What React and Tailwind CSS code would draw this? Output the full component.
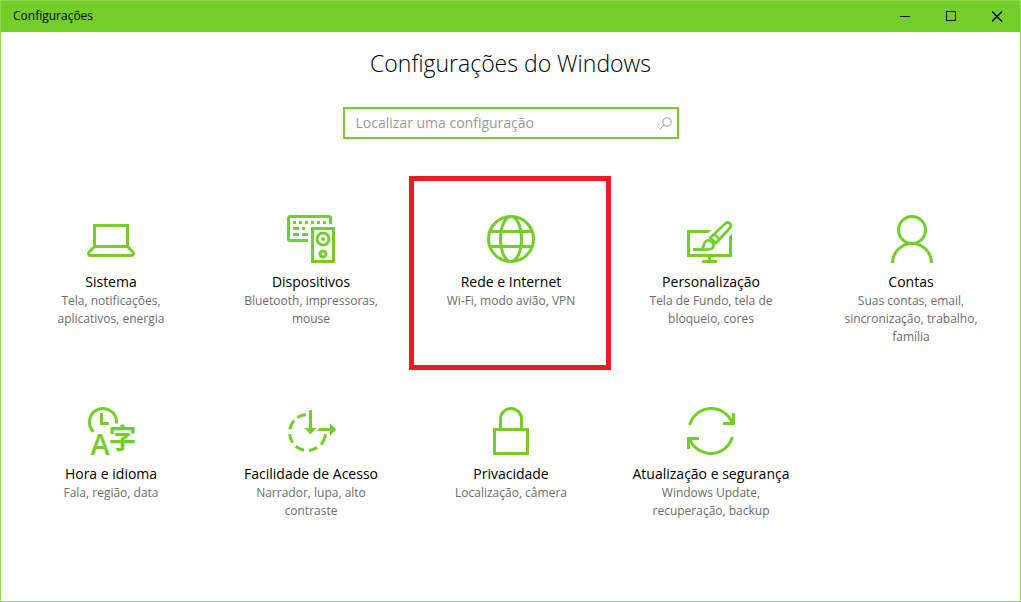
const green = "text-[#73ce2a]";

function Icon({ children }) {
  return (
    <svg
      viewBox="0 0 48 48"
      className={`size-12 shrink-0 overflow-visible ${green}`}
      fill="none"
      stroke="currentColor"
      strokeWidth="3"
      aria-hidden="true"
    >
      {children}
    </svg>
  );
}

const SystemIcon = () => (
  <Icon>
    <path d="M7.5 32V10.5h33V32M6.5 31.5h35" />
    <path d="M7.5 31.5l-5.2 5.2c-1.6 1.7-.8 3.8 1.4 3.8h40.6c2.2 0 3-2.1 1.4-3.8l-5.2-5.2" />
  </Icon>
);

const DevicesIcon = () => (
  <Icon>
    <path d="M21 25.5H3A1.5 1.5 0 0 1 1.5 24V3A1.5 1.5 0 0 1 3 1.5h39A1.5 1.5 0 0 1 43.5 3v6" />
    <path d="M6 7.5h3M12 7.5h3M18 7.5h3M24 7.5h3M30 7.5h3M36 7.5h3M6 13.5h6M15 13.5h3M6 19.5h6M15 19.5h6" />
    <rect x="25.5" y="13.5" width="21" height="33" />
    <circle cx="36" cy="24" r="6" />
    <circle cx="36" cy="24" r="2" fill="currentColor" stroke="none" />
    <circle cx="36" cy="39" r="3" />
  </Icon>
);

const NetworkIcon = () => (
  <Icon>
    <circle cx="24" cy="24" r="22.5" />
    <ellipse cx="24" cy="24" rx="10.5" ry="22.5" />
    <path d="M3 16.5h42M3 31.5h42" />
  </Icon>
);

const PersonalizationIcon = () => (
  <Icon>
    <path d="M24 15L21 18H3V39H42V21.5L45 18V42H0V15Z" fill="currentColor" stroke="none" />
    <path d="M22.5 42v4M15 46.5h15" />
    <path d="M6 34.5h15" />
    <path
      d="M23.3 22.7L38.6 8.3a3.2 3.2 0 0 1 4.500 4.500L28.800 28.200Z"
      strokeWidth="2.8"
      strokeLinejoin="round"
    />
    <path d="M27.300 19l5.200 5.200" strokeWidth="2.4" />
    <path
      d="M14.5 34.5c3-1.800 1.300-5 3.500-7.400 2-2.100 5.100-2.200 7.100-.2 2 2 1.900 5-.2 6.600-2 1.500-5.400 1-10.400 1Z"
      strokeWidth="2.8"
      fill="#fff"
    />
  </Icon>
);

const AccountsIcon = () => (
  <Icon>
    <circle cx="25" cy="15" r="13.5" />
    <path d="M5.5 48a19.5 19.5 0 0 1 39 0" />
  </Icon>
);

const TimeIcon = () => (
  <Icon>
    <path d="M6.5 24.6A13.5 13.5 0 1 1 29.4 16.5" />
    <path d="M14.5 6v10.5H22" />
    <text x="13" y="48" textAnchor="middle" fill="currentColor" stroke="none" className="font-['Open_Sans',sans-serif] text-[29px] font-semibold">
      A
    </text>
    <text x="35.5" y="42" textAnchor="middle" fill="currentColor" stroke="none" className="font-['Noto_Sans_CJK_SC',sans-serif] text-[28px] font-bold">
      字
    </text>
  </Icon>
);

const dash = ([from, to]) => {
  const point = (deg) => {
    const a = (deg * Math.PI) / 180;
    return `${(20.5 + 18 * Math.cos(a)).toFixed(2)} ${(25.5 + 18 * Math.sin(a)).toFixed(2)}`;
  };
  return `M${point(from)}A18 18 0 0 1 ${point(to)}`;
};

const dashes = [[5, 42], [57, 85], [101, 131], [146, 175], [190, 222], [236, 265]];

const AccessIcon = () => (
  <Icon>
    <path d={dashes.map(dash).join("")} />
    <path d="M23.5 3v19M32 22.5h12" />
    <path d="M17.5 21h12L23.5 27.5ZM43 16.2l6.3 6.3-6.3 6.3ZM30 24l3-3v3Z" fill="currentColor" stroke="none" />
  </Icon>
);

const PrivacyIcon = () => (
  <Icon>
    <rect x="7.5" y="22.5" width="33" height="24" />
    <path d="M13.5 22V12a10.5 10.5 0 0 1 21 0v10" />
  </Icon>
);

const UpdateIcon = () => (
  <Icon>
    <path d="M2.6 18A22.5 22.5 0 0 1 45.5 16.500M46.5 6v10.5H36" />
    <path d="M45.4 30A22.5 22.5 0 0 1 2.5 31.5M1.5 42V31.5H12" />
  </Icon>
);

const categories = [
  { title: "Sistema", text: "Tela, notificações, aplicativos, energia", Glyph: SystemIcon },
  { title: "Dispositivos", text: "Bluetooth, impressoras, mouse", Glyph: DevicesIcon },
  { title: "Rede e Internet", text: "Wi-Fi, modo avião, VPN", Glyph: NetworkIcon, highlighted: true },
  { title: "Personalização", text: "Tela de Fundo, tela de bloqueio, cores", Glyph: PersonalizationIcon },
  { title: "Contas", text: "Suas contas, email, sincronização, trabalho, família", Glyph: AccountsIcon },
  { title: "Hora e idioma", text: "Fala, região, data", Glyph: TimeIcon },
  { title: "Facilidade de Acesso", text: "Narrador, lupa, alto contraste", Glyph: AccessIcon },
  { title: "Privacidade", text: "Localização, câmera", Glyph: PrivacyIcon },
  { title: "Atualização e segurança", text: "Windows Update, recuperação, backup", Glyph: UpdateIcon },
];

function Category({ title, text, Glyph, highlighted }) {
  return (
    <a href="#" className="relative flex min-h-48 flex-col items-center pt-[37px] text-center">
      <Glyph />
      <span className="mt-[9px] text-sm leading-5 whitespace-nowrap text-black">{title}</span>
      <span className="w-[144px] text-[12px] leading-[18px] text-[#6b6b6b]">{text}</span>
      {highlighted && (
        <span className="pointer-events-none absolute -top-0.5 right-0 bottom-0 -left-0.5 border-5 border-[#ed1c24]" />
      )}
    </a>
  );
}

function WindowButton({ label, children }) {
  return (
    <button type="button" aria-label={label} className="flex w-[46px] items-center justify-center">
      <svg viewBox="0 0 11 11" className="size-[11px]" fill="none" stroke="#000" aria-hidden="true">
        {children}
      </svg>
    </button>
  );
}

export default function App() {
  return (
    <div className="flex min-h-screen flex-col border border-[#8fd955] bg-white font-['Open_Sans','Noto_Sans',sans-serif]">
      <header className="flex h-[31px] items-stretch justify-between bg-[#73ce2a]">
        <span className="pt-[7px] pl-3 text-[12px] leading-4 text-black">Configurações</span>
        <div className="flex">
          <WindowButton label="Minimizar">
            <path d="M0 5.5h10" />
          </WindowButton>
          <WindowButton label="Maximizar">
            <path d="M.5 .5h9v9h-9Z" />
          </WindowButton>
          <WindowButton label="Fechar">
            <path d="M0 .5l10 10M10 .5l-10 10" strokeWidth="1.3" />
          </WindowButton>
        </div>
      </header>
      <main className="flex flex-1 flex-col items-center">
        <h1 className="mt-[15px] text-[23px] leading-8 font-light text-black">Configurações do Windows</h1>
        <label className="mt-7 flex h-8 w-84 items-center border-2 border-[#73ce2a] pr-[5px] pl-[11px]">
          <input
            type="text"
            aria-label="Localizar uma configuração"
            placeholder="Localizar uma configuração"
            className="min-w-0 flex-1 text-sm leading-5 outline-none placeholder:text-[#999]"
          />
          <svg viewBox="0 0 13 13" className="size-[13px]" fill="none" stroke="#999" aria-hidden="true">
            <circle cx="8" cy="5" r="4.2" />
            <path d="M5 8L.5 12.5" />
          </svg>
        </label>
        <nav
          aria-label="Categorias"
          className="mt-[39px] grid w-full grid-cols-[repeat(auto-fill,200px)] justify-center pr-[9px] pl-2.5"
        >
          {categories.map((c) => (
            <Category key={c.title} {...c} />
          ))}
        </nav>
      </main>
    </div>
  );
}
